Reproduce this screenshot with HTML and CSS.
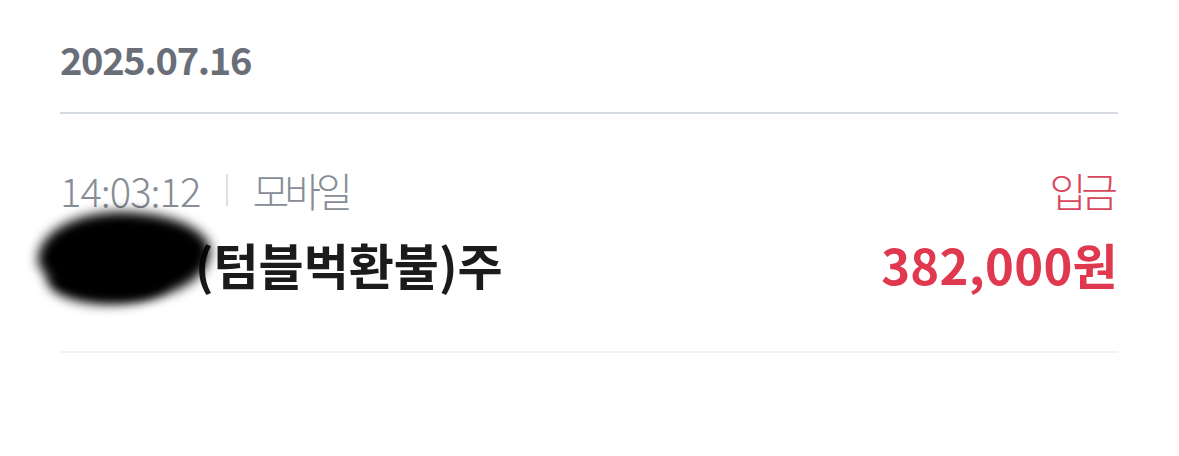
FILE: index.html
```html
<html>
	<head>
		<meta charset="utf-8">
		<link rel="stylesheet" href="styles.css">
	</head>
	<body>
		<div class="page">
			<div class="date">2025.07.16</div>

			<div class="item">
				<div class="row meta">
					<div class="left">
						<span class="time">14:03:12</span>
						<span class="bar"></span>
						<span class="channel">모바일</span>
					</div>
					<div class="kind">입금</div>
				</div>
				<div class="row main">
					<div class="name"><span class="redact"></span>(텀블벅환불)주</div>
					<div class="amount">382,000원</div>
				</div>
			</div>
		</div>
	</body>
</html>
```

FILE: styles.css
```css
body {
	margin: 0;
	background: #FFF;
	font-family: "Noto Sans CJK KR", "Noto Sans", sans-serif;
}

.page {
	padding: 40px 61px 0 60px;
}

.date {
	font-size: 38px;
	line-height: 1;
	font-weight: bold;
	color: #696e77;
	letter-spacing: -1.3px;
	padding-bottom: 34px;
	border-bottom: 2px solid #d6dae1;
}

.item {
	padding: 56px 0 63px 0;
	border-bottom: 2px solid #f1f2f7;
}

.row {
	display: flex;
	justify-content: space-between;
	align-items: baseline;
	line-height: 1;
}

.meta {
	font-size: 40px;
	font-weight: 300;
	color: #878d96;
}

.left {
	display: flex;
	align-items: center;
}

.time {
	letter-spacing: -1px;
}

.bar {
	width: 2px;
	height: 32px;
	background: #dcdfe4;
	margin: 0 24px 0 26px;
}

.channel {
	letter-spacing: -5px;
}

.kind {
	color: #d9445a;
	letter-spacing: -5px;
	margin-right: 5px;
}

.main {
	margin-top: 26px;
}

.name {
	font-size: 49px;
	font-weight: bold;
	color: #1b1b1d;
	letter-spacing: 0;
}

.redact {
	display: inline-block;
	position: relative;
	width: 135px;
	height: 1em;
}

.redact::before,
.redact::after {
	content: "";
	position: absolute;
	background: #000;
	filter: blur(6px);
}

.redact::before {
	left: -22px;
	top: -24px;
	width: 172px;
	height: 86px;
	border-radius: 48% 52% 45% 55% / 55% 45% 55% 45%;
}

.redact::after {
	left: -12px;
	top: 20px;
	width: 120px;
	height: 48px;
	border-radius: 50%;
}

.amount {
	font-size: 49px;
	font-weight: bold;
	color: #e0394f;
	letter-spacing: 0.3px;
}
```
